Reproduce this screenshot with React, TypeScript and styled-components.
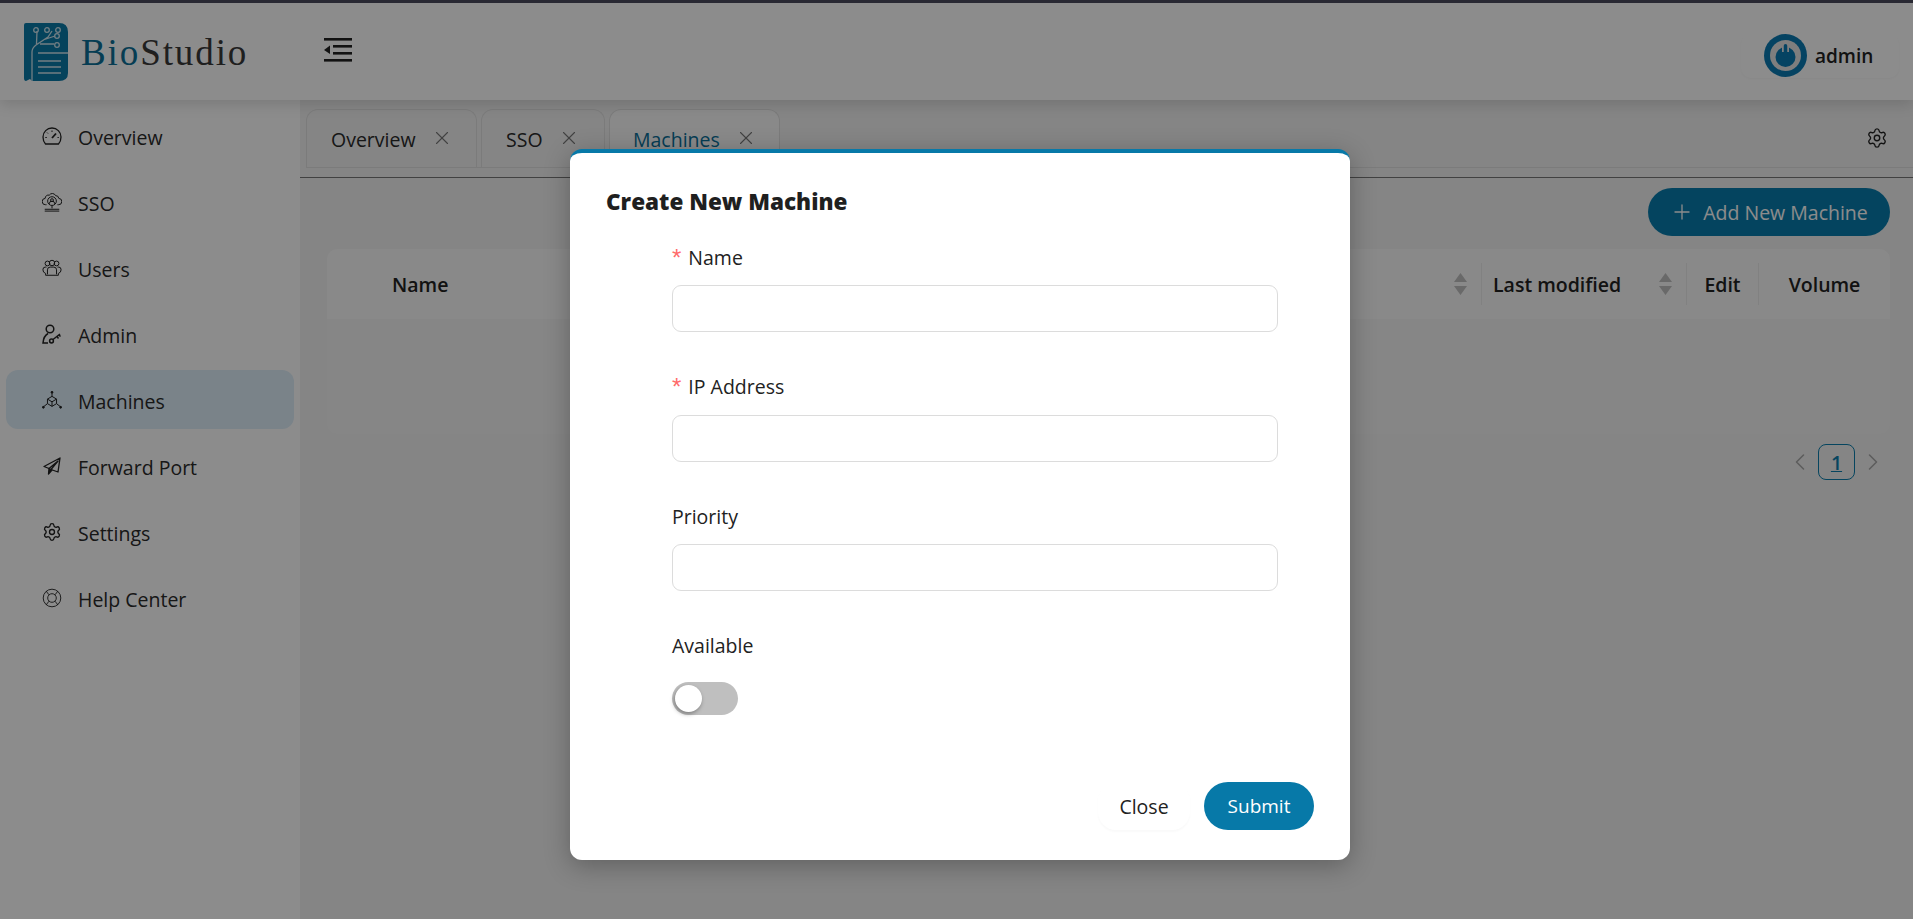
import React from "react";
import styled, { createGlobalStyle } from "styled-components";
import { Settings, X, Plus, ChevronLeft, ChevronRight } from "lucide-react";

const Global = createGlobalStyle`
  html, body { margin: 0; padding: 0; }
  body { font-family: "Open Sans", "Noto Sans", "Liberation Sans", sans-serif; color: #222; background: #fff; }
  * { box-sizing: border-box; }
`;

const Page = styled.div`
  position: relative; width: 1913px; height: 919px; overflow: hidden;
  display: flex; flex-direction: column; background: #fff;
`;
const Header = styled.header`
  height: 100px; flex: none; background: #fff; border-top: 3px solid #4b4b5e;
  display: flex; align-items: center; position: relative; z-index: 2;
  box-shadow: 0 4px 14px rgba(0,0,0,.14);
`;
const Brand = styled.div`
  width: 324px; flex: none; display: flex; align-items: center; gap: 13px; padding: 1px 0 0 24px;
`;
const BrandName = styled.span`
  font-family: "Liberation Serif", serif; font-size: 37px; letter-spacing: 1.9px; color: #3a3a3a; line-height: 1;
  b { font-weight: 400; color: #0b6f98; }
`;
const MenuButton = styled.div`display: flex; margin-bottom: 4px;`;
const UserBox = styled.div`
  margin-left: auto; margin-right: 14px; margin-top: 8px; width: 158px; height: 44px; padding: 0 0 0 23px;
  display: flex; align-items: center; gap: 8px; border-radius: 10px;
  box-shadow: 0 1px 2px rgba(0,0,0,.03);
`;
const UserName = styled.span`font-size: 19px; font-weight: 600; color: #222;`;
const Body = styled.div`flex: 1; display: flex; min-height: 0;`;
const Sidebar = styled.nav`
  width: 300px; flex: none; background: #fff; padding: 6px 6px 0; display: flex; flex-direction: column; gap: 7px;
`;
const NavItem = styled.div<{ $active?: boolean }>`
  height: 59px; border-radius: 12px; display: flex; align-items: center; gap: 16px; padding: 3px 0 0 36px;
  font-size: 19.5px; color: #2a2a2a; background: ${p => (p.$active ? "#deeef9" : "transparent")};
`;
const NavIcon = styled.span`width: 20px; height: 20px; display: flex; align-items: center; justify-content: center; color: #222; margin-top: -2px;`;
const Main = styled.main`flex: 1; background: #f2f2f2; min-width: 0; padding-top: 9px;`;
const TabBar = styled.div`
  height: 69px; border-bottom: 1px solid #777; padding: 0 0 10px 6px; position: relative;
`;
const TabRow = styled.div`
  height: 59px; display: flex; gap: 4px; border-bottom: 1px solid #e0e0e0; align-items: stretch;
`;
const Tab = styled.div<{ $active?: boolean; $w: number }>`
  width: ${p => p.$w}px; border: 1px solid #e0e0e0; border-bottom: none; border-radius: 12px 12px 0 0;
  display: flex; align-items: center; gap: 15px; padding: 2px 0 0 ${p => (p.$active ? 23 : 24)}px; font-size: 19.5px;
  color: ${p => (p.$active ? "#0a6f99" : "#2a2a2a")};
  background: ${p => (p.$active ? "#fafafa" : "transparent")};
  svg { color: #777; flex: none; margin-top: -3px; }
`;
const TabGear = styled.span`margin-left: auto; margin-right: 25px; display: flex; align-items: center; color: #222;`;
const Content = styled.div`padding: 10px 23px 0 27px; display: flex; flex-direction: column;`;
const Toolbar = styled.div`display: flex; justify-content: flex-end; margin-bottom: 13px;`;
const AddButton = styled.div`
  width: 242px; height: 48px; border-radius: 24px; background: #097dad; color: #fff; display: flex; align-items: center;
  justify-content: center; gap: 9px; font-size: 19.5px;
`;
const TableWrap = styled.div`background: #f4f4f4; border-radius: 10px;`;
const TableHead = styled.div`
  height: 70px; background: #f9f9f9; border-radius: 10px 10px 0 0; display: flex; align-items: center;
  font-size: 19.5px; font-weight: 600; color: #222;
`;
const HeadCell = styled.div<{ $w?: number; $center?: boolean; $sep?: boolean }>`
  ${p => (p.$w ? `width: ${p.$w}px; flex: none;` : "flex: 1;")}
  height: 42px; display: flex; align-items: center; justify-content: ${p => (p.$center ? "center" : "space-between")};
  padding: ${p => (p.$center ? "0" : "0 14px 0 11px")};
  border-left: ${p => (p.$sep ? "1px solid #ececec" : "none")};
`;
const NameCell = styled(HeadCell)`padding-left: 65px;`;
const TableEmpty = styled.div`height: 115px;`;
const Pager = styled.div`display: flex; justify-content: flex-end; align-items: center; margin-top: 10px; gap: 4px; padding-right: 3px; color: #aaa;`;
const PageNo = styled.div`
  width: 37px; height: 36px; border: 1px solid #0b7fae; border-radius: 8px; color: #0b7fae; display: flex; align-items: center;
  justify-content: center; font-size: 19.5px; text-decoration: underline; font-weight: 600;
`;
const Overlay = styled.div`
  position: absolute; inset: 0; z-index: 10; background: rgba(0,0,0,.45); padding: 149px 0 0 570px;
`;
const Modal = styled.div`
  width: 780px; height: 711px; background: #fff; border-radius: 12px; border-top: 4px solid #0779a8;
  box-shadow: 0 6px 26px rgba(0,0,0,.28); padding: 33px 36px 0; display: flex; flex-direction: column;
`;
const Title = styled.h2`margin: 0; font-size: 22.5px; font-weight: 800; color: #1f1f1f; line-height: 32px;`;
const Form = styled.div`margin: 25.5px 36px 0 66px; display: flex; flex-direction: column;`;
const Field = styled.div`height: 129.5px; display: flex; flex-direction: column;`;
const Label = styled.label`font-size: 19.5px; line-height: 28px; color: #222; margin-bottom: 13.5px; height: 28px; display: flex; align-items: center;`;
const Req = styled.span`color: #ff6b6b; margin-right: 7px; font-size: 24px; font-family: "Liberation Sans", sans-serif;`;
const Input = styled.div`height: 47px; flex: none; border: 1px solid #dcdcdc; border-radius: 9px; background: #fff;`;
const Switch = styled.div`
  width: 66px; height: 33px; margin-top: 8.5px; border-radius: 17px; background: #bfbfbf; padding: 3px; display: flex; flex: none;
`;
const Knob = styled.div`width: 27px; height: 27px; border-radius: 50%; background: #fff; box-shadow: -1px 2px 4px rgba(0,0,0,.35);`;
const Footer = styled.div`margin-top: auto; margin-bottom: 30px; display: flex; justify-content: flex-end; gap: 14px; align-items: center;`;
const CloseBtn = styled.div`
  width: 92px; height: 48px; border-radius: 18px; display: flex; align-items: center; justify-content: center; font-size: 19.5px;
  color: #222; background: #fff; box-shadow: 0 2px 2px rgba(0,0,0,.025);
`;
const SubmitBtn = styled.div`
  width: 110px; height: 48px; border-radius: 24px; display: flex; align-items: center; justify-content: center; font-size: 19px;
  color: #fff; background: #0779a8;
`;

const Logo = () => (
  <svg width="44" height="58" viewBox="0 0 44 58" style={{ flex: "none" }}>
    <path d="M2 0H35Q44 0 44 9V50Q44 58 35 58H8L6 56L2 58Q0 58 0 55V2Q0 0 2 0Z" fill="#0a7aa8" />
    <g fill="none" stroke="#cfe5ee" strokeWidth="1.3">
      <path d="M8 58V29Q8 25 12 22L24 14L28 8M12.5 21L13 8M19 17L31 13M16 21H30" />
      <path d="M14 30H44M14 38H37M14 44H37M14 50H37" />
      <circle cx="12" cy="7" r="2.3" /><circle cx="23" cy="7" r="2.3" /><circle cx="34" cy="7" r="2.3" /><circle cx="33" cy="13" r="2.3" /><circle cx="33" cy="22" r="2.3" />
    </g>
  </svg>
);
const MenuIcon = () => (
  <svg width="28" height="24" viewBox="0 0 28 24" fill="#222">
    <rect x="0" y="0" width="28" height="2.6" /><rect x="9" y="7" width="19" height="2.6" /><rect x="9" y="14" width="19" height="2.6" /><rect x="0" y="21" width="28" height="2.6" />
    <path d="M6 7.5V16L0 12Z" />
  </svg>
);
const PowerAvatar = () => (
  <svg width="43" height="43" viewBox="0 0 43 43">
    <circle cx="21.5" cy="21.5" r="21.5" fill="#0a7ab3" />
    <circle cx="21.5" cy="21.5" r="15.5" fill="#e6e6e6" />
    <circle cx="21.5" cy="23" r="10" fill="#0a7ab3" />
    <rect x="18" y="9" width="7" height="9" fill="#e6e6e6" />
    <rect x="19.75" y="10" width="3.5" height="14" rx="1.75" fill="#0a7ab3" />
  </svg>
);
const stroke = { fill: "none", stroke: "currentColor", strokeWidth: 1.1 } as const;
const GaugeIcon = () => (
  <svg width="20" height="18" viewBox="0 0 20 18" fill="none" stroke="currentColor" strokeWidth="1.3">
    <path d="M3.5 17Q1 14.5 1 10a9 9 0 0 1 18 0Q19 14.5 16.5 17Z" />
    <path d="M10 11L14 6.5" strokeWidth="1.8" />
    <path d="M10 3.5V5M5 5.5L6 6.5M3.3 10.5H4.8M15.5 10.5H16.8" strokeWidth="1" />
  </svg>
);
const SsoIcon = () => (
  <svg width="22" height="22" viewBox="0 0 22 22" {...stroke}>
    <path d="M5 14H4a3.5 3.5 0 0 1-.5-7A3.5 3.5 0 0 1 8 3.5a4 4 0 0 1 7 .5 3.4 3.4 0 0 1 3.5 3 3.5 3.5 0 0 1-.5 7h-1" />
    <circle cx="11" cy="10" r="4.8" /><circle cx="11" cy="9" r="1.6" /><path d="M8 13a3 3 0 0 1 6 0" />
    <path d="M11 15v3M3 19h16M3 21h16" />
  </svg>
);
const UsersIcon = () => (
  <svg width="22" height="18" viewBox="0 0 22 18" {...stroke}>
    <circle cx="6" cy="4" r="2.6" /><circle cx="11" cy="3.5" r="3" /><circle cx="16" cy="4" r="2.6" />
    <path d="M5 8H3.5Q1 8 1 11Q1 14 4 15V17H18V15Q21 14 21 11Q21 8 18.5 8H17M6 16V11Q6 8 9 8H13Q16 8 16 11V16" />
  </svg>
);
const AdminIcon = () => (
  <svg width="20" height="20" viewBox="0 0 20 20" fill="none" stroke="currentColor" strokeWidth="1.5">
    <circle cx="8" cy="5" r="3.8" /><path d="M6 9.5Q1.5 12 1 19H6" />
    <circle cx="9.5" cy="17" r="1.9" /><path d="M11 15.5L18 10M15 12.5L16.5 14.5M17 11L18.5 12.5" />
  </svg>
);
const MachinesIcon = () => (
  <svg width="22" height="20" viewBox="0 0 22 20" fill="none" stroke="currentColor" strokeWidth="1.1">
    <path d="M11 6L6 9V14L11 17L16 14V9ZM6 9L11 12L16 9M11 12V17M11 1V6M6 14L1 18M16 14L21 18" />
    <circle cx="11" cy="1.5" r="1" fill="currentColor" /><circle cx="1.5" cy="18" r="1" fill="currentColor" /><circle cx="20.5" cy="18" r="1" fill="currentColor" />
  </svg>
);
const PlaneIcon = () => (
  <svg width="18" height="18" viewBox="0 0 18 18" fill="none" stroke="currentColor" strokeWidth="1.3" strokeLinejoin="round">
    <path d="M17 1L1 9.5L6 11.5L15 4L8 12.5L15 15Z" />
    <path d="M6 11.5L5.5 17L9 13Z" fill="currentColor" />
  </svg>
);
const HelpIcon = () => (
  <svg width="20" height="20" viewBox="0 0 20 20" fill="none" stroke="currentColor" strokeWidth="0.9">
    <circle cx="10" cy="10" r="8.8" /><circle cx="10" cy="10" r="4.3" />
    <path d="M7 6.8L4 3M13 6.8L16 3M7 13.2L4 17M13 13.2L16 17" />
  </svg>
);
const SortIcon = () => (
  <svg width="13" height="22" viewBox="0 0 13 22" fill="#bfbfbf" style={{ flex: "none" }}><path d="M6.5 0L13 9H0ZM0 13H13L6.5 22Z" /></svg>
);

const nav = [
  { t: "Overview", i: <GaugeIcon /> },
  { t: "SSO", i: <SsoIcon /> },
  { t: "Users", i: <UsersIcon /> },
  { t: "Admin", i: <AdminIcon /> },
  { t: "Machines", i: <MachinesIcon />, a: true },
  { t: "Forward Port", i: <PlaneIcon /> },
  { t: "Settings", i: <Settings size={20} strokeWidth={1.6} /> },
  { t: "Help Center", i: <HelpIcon /> },
];

export default function App() {
  return (
    <Page>
      <Global />
      <Header>
        <Brand><Logo /><BrandName><b>Bio</b>Studio</BrandName></Brand>
        <MenuButton><MenuIcon /></MenuButton>
        <UserBox><PowerAvatar /><UserName>admin</UserName></UserBox>
      </Header>
      <Body>
        <Sidebar>
          {nav.map(n => (
            <NavItem key={n.t} $active={n.a}><NavIcon>{n.i}</NavIcon>{n.t}</NavItem>
          ))}
        </Sidebar>
        <Main>
          <TabBar>
            <TabRow>
              <Tab $w={171}>Overview<X size={22} strokeWidth={1.2} /></Tab>
              <Tab $w={124}>SSO<X size={22} strokeWidth={1.2} /></Tab>
              <Tab $w={171} $active>Machines<X size={22} strokeWidth={1.2} /></Tab>
              <TabGear><Settings size={22} strokeWidth={1.5} /></TabGear>
            </TabRow>
          </TabBar>
          <Content>
            <Toolbar><AddButton><Plus size={24} strokeWidth={1.3} />Add New Machine</AddButton></Toolbar>
            <TableWrap>
              <TableHead>
                <NameCell>Name<SortIcon /></NameCell>
                <HeadCell $w={205} $sep>Last modified<SortIcon /></HeadCell>
                <HeadCell $w={72} $center $sep>Edit</HeadCell>
                <HeadCell $w={132} $center $sep>Volume</HeadCell>
              </TableHead>
              <TableEmpty />
            </TableWrap>
            <Pager><ChevronLeft size={28} strokeWidth={1.3} /><PageNo>1</PageNo><ChevronRight size={28} strokeWidth={1.3} /></Pager>
          </Content>
        </Main>
      </Body>
      <Overlay>
        <Modal>
          <Title>Create New Machine</Title>
          <Form>
            <Field><Label><Req>*</Req>Name</Label><Input /></Field>
            <Field><Label><Req>*</Req>IP Address</Label><Input /></Field>
            <Field><Label>Priority</Label><Input /></Field>
            <Field><Label>Available</Label><Switch><Knob /></Switch></Field>
          </Form>
          <Footer><CloseBtn>Close</CloseBtn><SubmitBtn>Submit</SubmitBtn></Footer>
        </Modal>
      </Overlay>
    </Page>
  );
}
